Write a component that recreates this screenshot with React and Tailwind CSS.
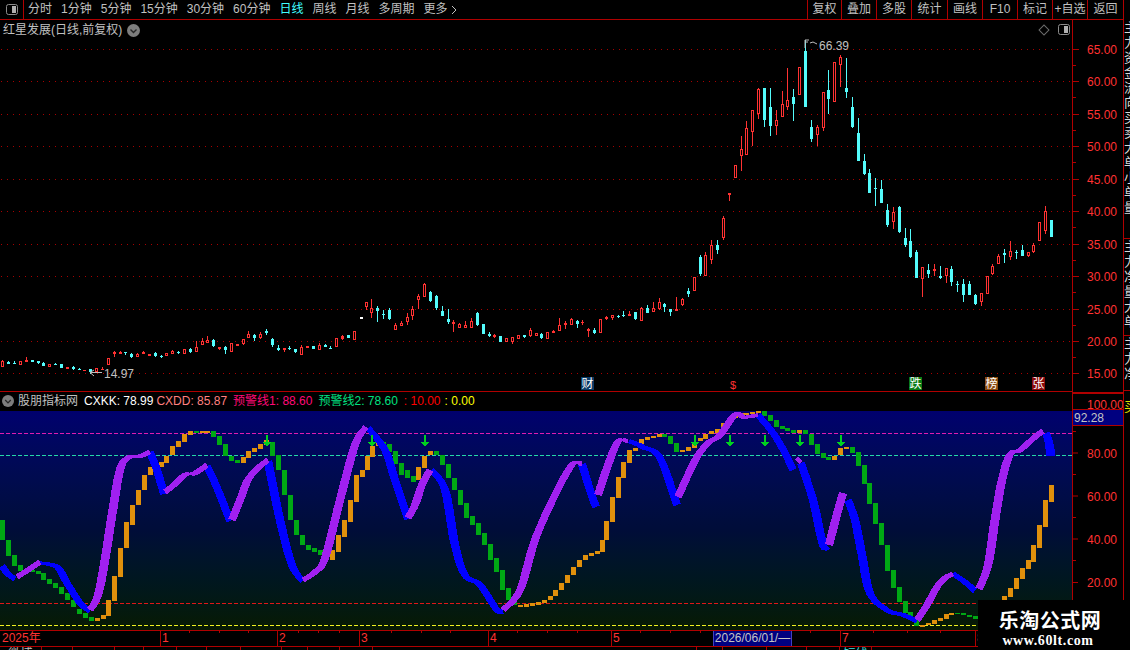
const TOOL_LEFT = ["分时", "1分钟", "5分钟", "15分钟", "30分钟", "60分钟", "日线", "周线", "月线", "多周期"];
const TOOL_RIGHT = [
  ["复权", 34], ["叠加", 35], ["多股", 35], ["统计", 36], ["画线", 35],
  ["F10", 35], ["标记", 35], ["+自选", 35], ["返回", 36],
];
const PRICES = [[65, 49], [60, 81], [55, 114], [50, 146], [45, 179], [40, 211], [35, 244], [30, 276], [25, 309], [20, 341], [15, 373]];
const SUB_TICKS = [[80, 452.5], [60, 495.5], [40, 538.5], [20, 582]];
const TABS = [42, 31, 42, 29, 33, 30, 34, 41, 26, 32, 33, 324, 26, 44, 40, 33, 32];

// [x, high, top, bottom, low, kind] in crop units: kind 0 hollow red, 1 cyan, 2 solid red
const A = [[7,270,273,290,291,0],[25,273,276,282,283,1],[43,273,279,281,282,1],[61,274,274,285,286,0],[79,262,269,276,276,2],[97,270,270,276,276,1],[115,273,274,279,282,1],[130,276,279,288,288,1],[148,282,282,290,291,0],[166,279,282,284,285,1],[184,282,282,294,294,1],[202,291,291,297,297,2],[220,288,291,298,300,1],[238,294,297,299,300,1],[252,300,300,303,303,2],[270,297,298,306,312,1],[289,294,294,306,306,0],[306,291,296,300,300,2],[325,264,264,285,285,0],[343,243,246,252,261,2],[361,243,245,252,252,2],[376,246,246,250,255,1],[394,249,252,261,264,1],[412,250,252,261,261,0],[430,243,245,252,252,2],[448,252,252,258,258,2],[466,246,249,258,261,1],[482,255,258,260,264,1],[499,249,249,258,258,0],[517,240,243,252,252,0],[535,243,245,250,252,1],[553,237,237,252,252,0],[571,234,237,247,249,1],[589,213,231,246,246,0],[607,204,213,225,225,0],[622,198,210,219,219,0],[640,207,210,229,231,1],[658,231,231,234,240,0],[676,228,231,240,252,1],[694,218,219,246,246,0],[712,222,222,224,228,0],[730,206,208,222,225,0],[745,183,192,204,204,0],[763,192,195,204,213,1],[781,186,192,204,207,0],[799,177,183,189,195,1],[817,204,207,225,231,1],[835,225,234,240,243,1],[853,234,234,240,246,2],[868,228,234,237,240,1],[886,237,237,246,249,1],[904,225,231,255,255,0],[922,228,228,234,234,2],[940,228,228,237,237,1],[958,219,225,240,240,0],[976,222,225,231,231,1],[991,228,234,236,237,1],[1009,204,204,231,231,0],[1027,195,198,207,210,2],[1045,195,195,204,204,1],[1063,183,183,210,210,0]];
const B = [[19,96,96,110,120,0],[34,87,114,129,144,0],[52,108,114,123,156,1],[70,120,132,135,147,1],[88,114,120,147,150,1],[106,159,165,180,180,0],[124,153,159,168,168,0],[142,129,141,156,165,0],[157,108,117,138,150,0],[175,72,78,90,117,0],[193,40,42,81,81,0],[211,63,66,93,96,1],[229,75,78,114,120,1],[247,108,123,138,138,1],[265,117,147,156,162,1],[280,150,156,159,186,0],[298,159,162,174,174,0],[316,153,165,174,174,0],[334,144,153,174,174,0],[352,126,129,165,168,1],[370,162,162,192,192,1],[388,186,192,198,201,1],[403,192,196,199,204,0],[421,198,198,216,216,1],[439,204,204,216,216,0],[457,201,201,216,222,0],[475,195,195,207,207,0],[493,195,195,201,204,1],[511,174,180,198,201,0],[529,189,189,198,198,0],[544,189,192,204,207,1],[562,186,186,207,207,0],[580,180,183,189,189,2],[598,144,165,183,183,0],[616,153,159,165,177,2],[634,144,147,165,165,0],[652,150,153,162,174,1],[667,150,156,159,165,2],[685,174,177,183,201,2],[703,174,180,189,192,1],[721,147,147,189,189,0],[739,138,141,147,150,2],[757,135,135,144,150,0],[775,135,138,141,144,1],[790,123,135,138,141,1],[808,123,132,138,138,2],[826,126,126,147,150,1],[844,111,114,153,153,0],[862,105,114,129,129,1],[880,96,114,126,126,0],[898,84,96,117,120,0],[913,99,102,111,126,1],[931,117,117,126,138,1],[949,81,117,123,123,2],[967,84,87,105,108,0],[985,54,63,72,81,1],[1003,21,21,63,63,0]];
// the bit of the climb between the crops, absolute pixels
const B2 = [[700,255,257,274,276,1],[705,252,255,276,276,0],[711,240,245,260,264,0],[717,240,245,250,254,1],[723,216,218,238,240,0],[729,193,193,195,201,0]];
const C = [[166,405,405,444,444,0],[184,318,357,378,423,0],[199,273,294,375,375,0],[217,240,240,306,348,0],[235,174,177,252,267,0],[253,174,174,270,291,1],[271,174,231,288,318,1],[289,240,270,288,315,0],[307,183,222,261,261,0],[322,114,210,231,240,0],[340,177,201,222,273,1],[358,111,111,195,195,0],[376,30,63,231,231,1],[394,270,291,327,336,1],[412,285,291,315,348,0],[430,186,186,294,303,0],[445,120,180,207,252,1],[463,96,96,216,216,0],[481,75,81,105,171,0],[499,84,174,186,204,1],[517,201,231,291,294,1],[535,264,309,393,393,1],[553,372,393,432,435,1]];
const D = [[73,12,33,72,75,1],[88,57,69,129,129,1],[106,84,114,117,168,1],[124,90,117,159,159,1],[142,162,180,225,231,1],[160,171,186,216,237,0],[178,168,171,246,249,1],[196,234,264,285,291,1],[211,237,273,321,324,1],[229,300,306,384,384,1],[247,351,351,387,441,0],[265,342,360,372,384,1],[283,342,357,363,378,2],[301,348,378,384,387,1],[319,354,354,378,399,0],[334,348,357,396,408,1],[352,393,402,403,426,1],[370,387,402,435,456,1],[388,393,402,435,435,1],[406,432,435,462,465,1],[424,429,429,456,468,0],[442,378,378,432,432,0],[457,342,348,372,375,0],[475,312,318,342,342,0],[493,297,309,315,339,1],[511,273,303,321,330,0],[529,300,306,309,327,1],[547,285,300,318,318,1],[565,306,306,318,321,0],[580,279,285,306,309,0],[598,216,216,273,273,0],[616,168,183,243,252,0],[634,210,210,261,261,1]];

const toAbs = (rows, ox, oy) =>
  rows.map(([x, hi, t, b, lo, k]) => [ox + x / 3, oy + hi / 3, oy + t / 3, oy + b / 3, oy + lo / 3, k]);

const CANDLES = [
  ...toAbs(A, 0, 270),
  ...toAbs(B, 360, 270),
  ...B2,
  ...toAbs(C, 680, 30),
  ...toAbs(D, 840, 150),
];

// [x, top, bottom]
const ORANGE = [[97,618,621],[103,615,619],[108,600,616],[114,576,601],[120,548,577],[126,522,548],[132,505,525],[138,490,505],[144,475,490],[150,467,475],[155,467,470],[161,462,467],[166,456,463],[172,446,455],[178,441,447],[184,434,442],[190,431,435],[202,431,433],[207,431,433],[243,457,463],[248,451,458],[254,448,452],[260,444,449],[266,440,445],[332,550,560],[338,535,552],[344,520,537],[350,500,522],[356,475,502],[362,470,477],[367,456,470],[372,446,457],[378,442,446],[418,467,480],[424,456,468],[430,451,455],[520,605,607],[526,604,607],[532,603,606],[538,602,605],[544,600,603],[550,596,600],[555,590,596],[561,583,590],[567,575,583],[573,567,575],[579,560,567],[585,555,560],[591,553,556],[597,551,554],[602,540,552],[606,521,540],[612,497,522],[618,477,498],[623,462,478],[629,450,463],[635,448,451],[641,439,446],[647,437,440],[653,436,438],[659,434,437],[682,450,452],[688,447,451],[694,444,448],[700,438,441],[705,434,439],[711,431,434],[717,429,433],[723,423,429],[729,419,423],[735,414,418],[741,413,415],[746,413,415],[752,412,414],[758,411,413],[799,430,433],[834,456,460],[840,448,455],[846,447,449],[922,625,627],[928,623,625],[934,620,624],[940,618,621],[946,614,619],[951,613,615],[1004,596,600],[1010,588,597],[1016,578,589],[1022,568,579],[1028,560,569],[1033,545,562],[1039,525,548],[1045,500,527],[1051,485,502]];
const GREEN = [[2,520,540],[8,540,556],[14,555,566],[20,565,571],[26,569,571],[32,570,572],[38,571,574],[43,573,580],[49,579,584],[55,583,588],[61,587,594],[67,593,600],[73,600,607],[79,609,614],[85,613,618],[91,617,621],[196,431,433],[213,431,437],[219,436,445],[225,444,456],[231,456,461],[237,460,463],[272,442,456],[278,455,470],[284,470,495],[290,495,520],[296,520,535],[302,535,545],[308,545,550],[314,548,552],[320,550,555],[326,553,560],[383,442,445],[389,444,452],[395,451,464],[401,463,475],[407,470,478],[413,476,482],[436,451,455],[442,455,465],[448,464,478],[454,478,490],[460,490,505],[466,503,518],[472,516,525],[478,523,535],[484,533,545],[490,544,560],[496,558,572],[502,570,590],[508,588,600],[514,598,605],[664,434,437],[670,436,444],[676,443,452],[764,411,416],[770,415,421],[776,420,427],[782,426,429],[787,428,431],[793,430,433],[805,430,434],[811,434,445],[817,444,454],[823,453,458],[828,457,460],[852,447,453],[858,452,466],[864,465,484],[869,483,504],[875,503,524],[881,523,545],[887,545,571],[893,570,588],[899,587,602],[905,601,613],[910,612,617],[916,620,626],[957,613,614],[963,613,615],[969,615,617],[975,616,619]];

const PURPLE = [
  [[17,577],[28,570],[40,562]],
  [[90,610],[98,595],[105,560],[112,515],[120,470],[128,458],[140,456],[150,452]],
  [[165,492],[175,484],[185,475],[195,473],[207,465]],
  [[232,520],[240,500],[248,480],[258,468],[268,460]],
  [[303,580],[315,572],[325,558],[340,500],[355,445],[366,427]],
  [[408,518],[415,505],[422,485],[430,470]],
  [[503,610],[520,590],[535,540],[555,495],[572,465],[582,464]],
  [[598,495],[608,465],[618,442],[628,441]],
  [[678,497],[688,475],[697,457],[708,443],[720,435],[735,415],[745,417],[758,415]],
  [[797,462],[800,459]],
  [[829,545],[836,518],[843,493]],
  [[917,620],[927,605],[937,587],[945,578],[953,574]],
  [[979,589],[988,565],[995,520],[1002,480],[1010,455],[1020,450],[1035,437],[1043,431]],
];
const BLUE = [
  [[2,566],[8,574],[15,579]],
  [[40,563],[57,567],[67,583],[80,603],[90,611]],
  [[150,452],[157,470],[164,494]],
  [[207,466],[218,490],[230,521]],
  [[268,461],[280,520],[292,565],[303,581]],
  [[368,428],[385,450],[395,480],[408,519]],
  [[431,470],[445,490],[455,545],[465,575],[480,585],[497,610],[503,611]],
  [[582,464],[590,490],[596,507]],
  [[629,441],[643,447],[660,458],[677,505]],
  [[758,415],[773,433],[785,453],[793,470]],
  [[801,463],[813,500],[823,545],[827,546]],
  [[848,500],[855,520],[862,555],[870,593],[887,610],[903,615],[917,621]],
  [[953,574],[965,582],[975,591]],
  [[1046,433],[1049,443],[1051,456]],
];
const ARROWS = [267, 372, 425, 695, 730, 765, 800, 841];
const TIME_MAJOR = [[160, "1"], [277, "2"], [359, "3"], [488, "4"], [611, "5"], [840, "7"], [975, "8"]];
const TIME_MINOR = [189, 219, 248, 298, 318, 339, 391, 421, 450, 517, 547, 577, 640, 670, 700, 810, 873, 907, 940];

function smooth(pts) {
  const out = [];
  for (let i = 0; i < pts.length - 1; i++) {
    const p0 = pts[Math.max(i - 1, 0)];
    const p1 = pts[i];
    const p2 = pts[i + 1];
    const p3 = pts[Math.min(i + 2, pts.length - 1)];
    const steps = Math.max(2, Math.ceil(p2[0] - p1[0]));
    for (let s = 0; s < steps; s++) {
      const t = s / steps;
      const f = (a, b, c, d) =>
        0.5 * (2 * b + (c - a) * t + (2 * a - 5 * b + 4 * c - d) * t * t + (3 * b - a - 3 * c + d) * t * t * t);
      out.push([f(p0[0], p1[0], p2[0], p3[0]), f(p0[1], p1[1], p2[1], p3[1])]);
    }
  }
  out.push(pts[pts.length - 1]);
  return out;
}

function ribbon(pts) {
  const s = smooth(pts);
  const upper = [];
  const lower = [];
  s.forEach((p, i) => {
    const a = s[Math.max(i - 1, 0)];
    const b = s[Math.min(i + 1, s.length - 1)];
    const dx = b[0] - a[0];
    const dy = b[1] - a[1];
    const len = Math.hypot(dx, dy) || 1;
    const h = 1.3 + (3.6 * Math.abs(dy)) / (Math.abs(dx) + Math.abs(dy) || 1);
    upper.push(`${(p[0] + (dy / len) * h).toFixed(1)},${(p[1] - (dx / len) * h).toFixed(1)}`);
    lower.unshift(`${(p[0] - (dy / len) * h).toFixed(1)},${(p[1] + (dx / len) * h).toFixed(1)}`);
  });
  return [...upper, ...lower].join(" ");
}

function Chevron({ className }) {
  return (
    <svg viewBox="0 0 13 13" className={className}>
      <circle cx="6.5" cy="6.5" r="6.5" fill="#7d7d7d" />
      <path d="M3.5 5.5 L6.5 8.5 L9.5 5.5" fill="none" stroke="#262626" strokeWidth="1.4" />
    </svg>
  );
}

function PanelIcon({ className }) {
  return (
    <svg viewBox="0 0 12 11" className={className}>
      <rect x="0.5" y="0.5" width="11" height="10" rx="2" fill="none" stroke="#8c8c8c" />
      <rect x="6" y="2" width="4" height="7" fill="#b0b0b0" />
    </svg>
  );
}

function Candle({ c }) {
  const [x, hi, top, bot, lo, kind] = c;
  const cx = Math.round(x);
  const color = kind === 1 ? "#54fcfc" : "#ff3232";
  const t = Math.round(top);
  const b = Math.max(Math.round(bot), t + 1);
  return (
    <g shapeRendering="crispEdges">
      <rect x={cx} y={Math.round(hi)} width="1" height={Math.max(Math.round(lo) - Math.round(hi), 1)} fill={color} />
      {kind === 0 ? (
        <rect x={cx - 0.5} y={t + 0.5} width="2" height={b - t - 1 > 0 ? b - t - 1 : 1} fill="#000" stroke={color} />
      ) : (
        <rect x={cx - 1} y={t} width="3" height={b - t} fill={color} />
      )}
    </g>
  );
}

function MainChart() {
  return (
    <svg viewBox="0 20 1072 371" className="block w-[1072px] h-[371px]">
      {PRICES.map(([p, y]) => (
        <line key={p} x1="1" x2="1072" y1={y + 0.5} y2={y + 0.5} stroke="#a80000" strokeDasharray="1 5" shapeRendering="crispEdges" />
      ))}
      {CANDLES.map((c, i) => (
        <Candle key={i} c={c} />
      ))}
      <rect x="360" y="317" width="3" height="2" fill="#fff" />
      <path d="M805 48 V40 H809 M805 42 H808 M810 43 L813 42 L817 44" fill="none" stroke="#bdbdbd" strokeWidth="1" />
      <text x="819" y="50" fontSize="12" fill="#c0c0c0">66.39</text>
      <path d="M102 372.5 H90 L94 370 M90 372.5 L94 376" fill="none" stroke="#bdbdbd" strokeWidth="1" />
      <text x="104" y="378" fontSize="12" fill="#c0c0c0">14.97</text>
      <rect x="581" y="377" width="13" height="13" fill="#0a3a66" />
      <text x="581.5" y="388" fontSize="12" fill="#fff">财</text>
      <text x="730" y="389" fontSize="11" fill="#ff3232">$</text>
      <rect x="909" y="377" width="13" height="13" fill="#0a7a14" />
      <text x="909.5" y="388" fontSize="12" fill="#fff">跌</text>
      <rect x="985" y="377" width="13" height="13" fill="#8a4a10" />
      <text x="985.5" y="388" fontSize="12" fill="#fff">榜</text>
      <rect x="1032" y="377" width="13" height="13" fill="#8c0a0a" />
      <text x="1032.5" y="388" fontSize="12" fill="#fff">张</text>
    </svg>
  );
}

function SubChart() {
  return (
    <svg viewBox="0 411 1072 219" className="block w-[1072px] h-[219px]">
      <line x1="0" x2="1072" y1="433.5" y2="433.5" stroke="#e01cb0" strokeDasharray="4 2" shapeRendering="crispEdges" />
      <line x1="0" x2="1072" y1="455.5" y2="455.5" stroke="#25d8a8" strokeDasharray="4 2" shapeRendering="crispEdges" />
      <line x1="0" x2="1072" y1="603.5" y2="603.5" stroke="#e01818" strokeDasharray="4 2" shapeRendering="crispEdges" />
      <line x1="0" x2="1072" y1="625.5" y2="625.5" stroke="#f0f020" strokeDasharray="4 2" shapeRendering="crispEdges" />
      {GREEN.map(([x, t, b]) => (
        <rect key={x} x={x - 2} y={t} width="5" height={b - t} fill="#00a814" shapeRendering="crispEdges" />
      ))}
      {ORANGE.map(([x, t, b]) => (
        <rect key={x} x={x - 2} y={t} width="5" height={b - t} fill="#e0900c" shapeRendering="crispEdges" />
      ))}
      {BLUE.map((pts, i) => (
        <polygon key={i} points={ribbon(pts)} fill="#0000ff" shapeRendering="crispEdges" />
      ))}
      {PURPLE.map((pts, i) => (
        <polygon key={i} points={ribbon(pts)} fill="#a020f0" shapeRendering="crispEdges" />
      ))}
      {ARROWS.map((x) => (
        <path key={x} d={`M${x - 1} 435 h2 v7 h3 l-4 5 l-4 -5 h3 z`} fill="#00d020" shapeRendering="crispEdges" />
      ))}
    </svg>
  );
}

function Axis() {
  return (
    <svg viewBox="1073 20 50 610" className="block w-[50px] h-[610px] absolute top-0 left-0">
      {PRICES.map(([p, y], i) => (
        <g key={p}>
          <rect x="1073" y={y} width="6" height="1" fill="#b00000" />
          {i < PRICES.length - 1 && <rect x="1073" y={y + 16} width="3" height="1" fill="#b00000" />}
          <text x="1087" y={y + 5} fontSize="12" fill="#ff3232">{p}.00</text>
        </g>
      ))}
      <rect x="1073" y="392" width="50" height="2" fill="#b00000" />
      <text x="1087" y="409" fontSize="12" fill="#ff3232">100.00</text>
      <rect x="1073" y="409" width="50" height="16" fill="#000080" />
      <rect x="1073" y="409" width="50" height="1" fill="#b00000" />
      <rect x="1073" y="425" width="50" height="1" fill="#b00000" />
      <text x="1074" y="422" fontSize="12" fill="#c4c4c4">92.28</text>
      {SUB_TICKS.map(([p, y]) => (
        <g key={p}>
          <rect x="1073" y={y} width="5" height="1" fill="#b00000" />
          <rect x="1073" y={y + 21.5} width="3" height="1" fill="#b00000" />
          <text x="1087" y={y + 5} fontSize="12" fill="#ff3232">{p}.00</text>
        </g>
      ))}
      <rect x="1073" y="431" width="3" height="1" fill="#b00000" />
    </svg>
  );
}

function Legend() {
  return (
    <div className="h-[20px] border-t border-[#b00000] flex items-center pl-[2px] pb-[2px] text-[12px]">
      <Chevron className="w-[12px] h-[12px] mr-[4px]" />
      <span className="text-[#c0c0c0] mr-[6px]">股朋指标网</span>
      <span className="text-white mr-[3px]">CXKK: 78.99</span>
      <span className="text-[#ff8080] mr-[6px]">CXDD: 85.87</span>
      <span className="text-[#ff0a78] mr-[6px]">预警线1: 88.60</span>
      <span className="text-[#00e080] mr-[6px]">预警线2: 78.60</span>
      <span className="text-[#ff0000] mr-[4px]">: 10.00</span>
      <span className="text-[#ffff00]">: 0.00</span>
    </div>
  );
}

function Timeline() {
  return (
    <div className="relative h-[17px] border-y border-[#b00000] text-[12px] leading-[15px] text-[#ff3232]">
      <span className="absolute left-[2px] top-0">2025年</span>
      {TIME_MAJOR.map(([x, label]) => (
        <span key={x} className="absolute top-0 h-[15px] border-l border-[#b00000] pl-[1px]" style={{ left: x }}>
          {label}
        </span>
      ))}
      {TIME_MINOR.map((x) => (
        <span key={x} className="absolute top-0 h-[2px] border-l border-[#b00000]" style={{ left: x }} />
      ))}
      <span className="absolute left-[713px] top-0 w-[79px] h-[15px] bg-[#000080] border-x border-[#4040c0] text-[#c4c4c4] text-center whitespace-nowrap">
        2026/06/01/—
      </span>
    </div>
  );
}

function BottomTabs() {
  return (
    <div className="h-[3px] flex overflow-hidden text-[12px] leading-[14px]">
      {TABS.map((w, i) => (
        <div key={i} className={`shrink-0 border-r border-[#b00000] overflow-hidden text-center ${i === 16 ? "text-[#40e0e0]" : "text-[#c0c0c0]"}`} style={{ width: w }}>
          {i === 0 ? "微博" : i === 16 ? "短线" : ""}
        </div>
      ))}
    </div>
  );
}

export default function App() {
  return (
    <div className="relative w-[1130px] h-[650px] overflow-hidden bg-black font-['Liberation_Sans','Noto_Sans_CJK_SC',sans-serif] text-[#c0c0c0]">
      <div className="w-[1124px] h-[20px] flex items-center border-b border-[#b00000] text-[12px] leading-[19px]">
        <div className="w-[24px] h-[19px] flex items-center justify-center border-r border-[#b00000]">
          <PanelIcon className="w-[12px] h-[11px]" />
        </div>
        <div className="flex gap-[9px] pl-[4px]">
          {TOOL_LEFT.map((t) => (
            <span key={t} className={t === "日线" ? "text-[#40ffff]" : ""}>{t}</span>
          ))}
          <span className="flex items-center gap-[3px]">
            更多
            <svg viewBox="0 0 6 10" className="w-[6px] h-[10px]">
              <path d="M1 1 L5 5 L1 9" fill="none" stroke="#c0c0c0" />
            </svg>
          </span>
        </div>
        <div className="ml-auto flex border-r border-[#b00000]">
          {TOOL_RIGHT.map(([t, w]) => (
            <div key={t} className="h-[19px] text-center border-l border-[#b00000]" style={{ width: w }}>{t}</div>
          ))}
        </div>
      </div>

      <div className="flex">
        <div className="w-[1072px] shrink-0">
          <div className="relative h-[371px]">
            <MainChart />
            <div className="absolute left-[3px] top-[2px] flex items-center gap-[5px] text-[12px] leading-[16px]">
              <span>红星发展(日线,前复权)</span>
              <Chevron className="w-[13px] h-[13px]" />
            </div>
            <div className="absolute left-[1040px] top-[6px] w-[8px] h-[8px] rotate-45 border border-[#6c6c6c]" />
            <PanelIcon className="absolute left-[1058px] top-[4px] w-[12px] h-[11px]" />
          </div>
          <Legend />
          <div className="h-[219px] bg-linear-to-b from-[#00006e] via-[#000d38] via-55% to-[#081a02]">
            <SubChart />
          </div>
          <Timeline />
          <BottomTabs />
        </div>

        <div className="relative w-[52px] h-[630px] shrink-0 border-x border-[#b00000]">
          <Axis />
        </div>

        <div className="w-[6px] shrink-0 overflow-hidden text-[13px] leading-[15px] text-[#d8d8d8]">
          <div className="h-[219px] overflow-hidden border-b border-[#b00000] w-[40px]">
            {["主", "力", "资", "金", "流", "向", "买", "卖", "大", "单", "小", "单", "量"].map((t, i) => (
              <div key={i}>{t}</div>
            ))}
          </div>
          <div className="h-[97px] overflow-hidden border-b border-[#b00000] w-[40px]">
            {["主", "力", "净", "量", "大", "单"].map((t, i) => (
              <div key={i}>{t}</div>
            ))}
          </div>
          <div className="h-[55px] overflow-hidden border-b border-[#b00000] w-[40px]">
            {["主", "力", "净"].map((t, i) => (
              <div key={i}>{t}</div>
            ))}
          </div>
          <div className="mt-[8px] text-[#e0e000]">买</div>
        </div>
      </div>

      <div className="absolute left-[978px] top-[600px] w-[152px] h-[50px] bg-black text-white text-center">
        <div className="pt-[8px] pr-[8px] text-[20px] leading-[26px] font-bold tracking-[0.5px]">乐淘公式网</div>
        <div className="pr-[12px] text-[14px] leading-[14px] font-bold font-['Liberation_Serif',serif] tracking-[0.6px]">www.60lt.com</div>
      </div>
    </div>
  );
}
